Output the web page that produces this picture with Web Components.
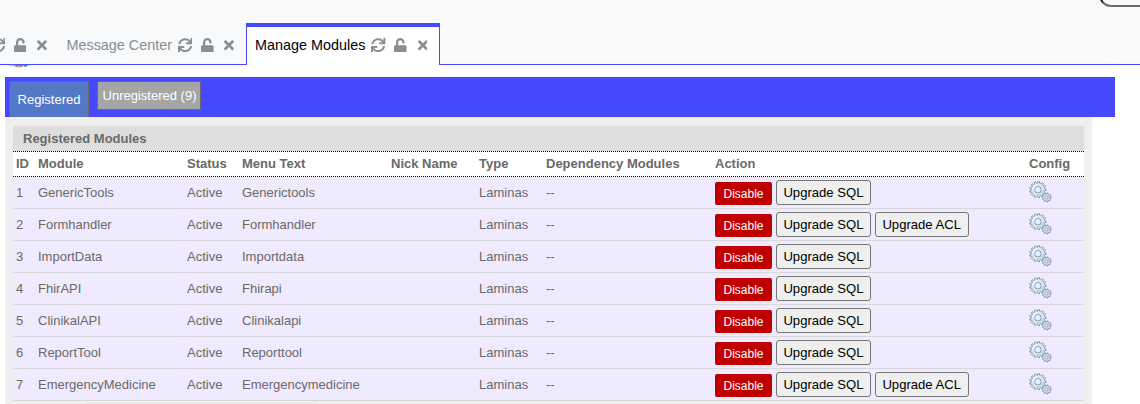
<!DOCTYPE html>
<html lang="en"><head><meta charset="utf-8"><title>Manage Modules</title>
<style>html,body{margin:0;height:404px;overflow:hidden;background:#fff;font-family:"Liberation Sans",Arial,sans-serif}</style></head>
<body><modules-app></modules-app>
<script>
const define=(name,html,setup)=>customElements.define(name,class extends HTMLElement{
  connectedCallback(){
    if(this.shadowRoot)return;
    const t=document.createElement('template');
    t.innerHTML=html;
    this.attachShadow({mode:'open'}).append(t.content.cloneNode(true));
    if(setup)setup(this,this.shadowRoot);
  }
});

const SYNC='M440.65 12.57l4 82.77A247.16 247.16 0 0 0 255.83 8C134.73 8 33.91 94.92 12.29 209.82A12 12 0 0 0 24.09 224h49.05a12 12 0 0 0 11.67-9.26 175.91 175.91 0 0 1 317-56.94l-101.46-4.86a12 12 0 0 0-12.57 12v47.41a12 12 0 0 0 12 12H500a12 12 0 0 0 12-12V12a12 12 0 0 0-12-12h-47.37a12 12 0 0 0-11.98 12.57zM255.83 432a175.61 175.61 0 0 1-146-77.8l101.8 4.87a12 12 0 0 0 12.57-12v-47.4a12 12 0 0 0-12-12H12a12 12 0 0 0-12 12V500a12 12 0 0 0 12 12h47.35a12 12 0 0 0 12-12.6l-4.15-82.57A247.17 247.17 0 0 0 255.83 504c121.11 0 221.93-86.92 243.55-201.82a12 12 0 0 0-11.8-14.18h-49.05a12 12 0 0 0-11.67 9.26A175.86 175.86 0 0 1 255.83 432z';
const UNLOCK='M400 256H152V152.9c0-39.6 31.7-72.5 71.3-72.9 40-.4 72.7 32.1 72.7 72v16c0 13.3 10.7 24 24 24h32c13.3 0 24-10.7 24-24v-16C376 68 307.5-.3 223.5 0 139.5.3 72 69.5 72 153.5V256H48c-26.5 0-48 21.5-48 48v160c0 26.5 21.5 48 48 48h352c26.5 0 48-21.5 48-48V304c0-26.5-21.5-48-48-48z';
const TIMES='M242.72 256l100.07-100.07c12.28-12.28 12.28-32.19 0-44.48l-22.24-22.24c-12.28-12.28-32.19-12.28-44.48 0L176 189.28 75.93 89.21c-12.28-12.28-32.19-12.28-44.48 0L9.21 111.45c-12.28 12.28-12.28 32.19 0 44.48L109.28 256 9.21 356.07c-12.28 12.28-12.28 32.19 0 44.48l22.24 22.24c12.28 12.28 32.2 12.28 44.48 0L176 322.72l100.07 100.07c12.28 12.28 32.2 12.28 44.48 0l22.24-22.24c12.28-12.28 12.28-32.19 0-44.48L242.72 256z';

// Toothed outline with a round hole in the middle.
const gear=(cx,cy,outer,root,hole,teeth)=>{
  let d='';
  const step=2*Math.PI/teeth;
  for(let i=0;i<teeth;i++){
    for(const [r,o] of [[root,-.32],[outer,-.18],[outer,.18],[root,.32]]){
      const a=(i+o)*step;
      d+=(d?'L':'M')+(cx+r*Math.cos(a)).toFixed(2)+' '+(cy+r*Math.sin(a)).toFixed(2);
    }
  }
  return d+`ZM${cx-hole} ${cy}a${hole} ${hole} 0 1 0 ${2*hole} 0a${hole} ${hole} 0 1 0 ${-2*hole} 0Z`;
};

define('frame-tab',`<style>
:host{display:flex;box-sizing:border-box;height:42px;flex:none;align-items:center;padding:2px 11.9px 0 8.6px;font-size:14.4px;color:#868e96;white-space:nowrap}
:host([active]){background:#fff;color:#000;border:1px solid #4649ff;border-top-width:4px;border-bottom:0;padding:0 11.2px 2px 8px}
:host(:empty){padding-right:11.2px}
svg{height:14.4px;fill:#868e96;flex:none;display:block}
.s{width:14.4px;margin-left:6px}.u{width:12.6px;margin-left:8.6px}.x{width:9.9px;margin-left:10.6px}
</style><slot></slot>
<svg class="s" viewBox="0 0 512 512"><path d="${SYNC}"/></svg>
<svg class="u" viewBox="0 0 448 512"><path d="${UNLOCK}"/></svg>
<svg class="x" viewBox="0 0 352 512"><path d="${TIMES}"/></svg>`);

define('tab-strip',`<style>
:host{display:flex;position:relative;box-sizing:border-box;height:65px;background:linear-gradient(#4649ff,#4649ff) bottom/100% 1px no-repeat #f8f9fa;padding-top:23px;overflow:hidden;justify-content:flex-start}
.lead{width:246px;display:flex;justify-content:flex-end;flex:none}
.search{position:absolute;left:1099px;top:-24px;width:80px;height:27px;border:2px solid #6b6b6b;border-left-color:#222;border-radius:12px}
</style><div class="lead"><slot name="background"></slot></div><slot></slot><div class="search"></div>`);

define('action-button',`<style>
:host{display:inline-flex;box-sizing:border-box;width:95px;height:25px;padding-left:6.4px;align-items:center;border:1px solid #767676;border-radius:3px;background:#efefef;color:#000;font-size:13.1px;white-space:nowrap}
:host([acl]){width:94px}
:host([danger]){height:23px;width:57px;padding:0;justify-content:center;margin-top:2px;border:0;border-radius:2px;background:#c00000;color:#fff;font-size:12px}
</style><slot></slot>`);

define('config-gears',`<style>:host{display:block;width:24px;height:24px}svg{display:block}</style>
<svg width="24" height="24" viewBox="0 0 24 24" fill="#dce7f1" fill-rule="evenodd">
<path d="${gear(8.9,9.7,8.2,6.6,3.3,13)}" stroke="#7f95ab" stroke-width=".9"/>
<path d="M4.2 9.7a4.7 4.7 0 0 1 4.7-4.7" fill="none" stroke="#f8fbfd" stroke-width="1.5"/>
<path d="M13.9 10.2a5 5 0 0 1-5 4.5" fill="none" stroke="#bccddd" stroke-width="1.4"/>
<path d="${gear(17.7,17.4,4.5,3.5,1.6,9)}" stroke="#70879f" stroke-width=".8"/>
</svg>`);

define('module-nav',`<style>
:host{display:flex;box-sizing:border-box;width:1110px;height:40px;margin-left:5px;padding:4px 4px 0;gap:8px;background:#4649ff;color:#fff;font-size:13px;align-items:flex-start}
div{box-sizing:border-box;border:1px solid #6a6a6a;display:flex;align-items:center;justify-content:center;white-space:nowrap}
.on{width:80px;height:36px;border-bottom:0;background:#5478c8}
.off{width:104px;height:29px;padding-left:1px;background:#a5a5a5}
</style><div class="on">Registered</div><div class="off">Unregistered (9)</div>`);

define('module-row',`<style>
:host{display:grid;grid-template-columns:22px 149px 55px 149px 88px 67px 169px 314px 58px;box-sizing:border-box;height:32px;border-bottom:1px solid #d8d8dc;background:#f0eafe;align-items:center}
span{padding-left:3px;white-space:nowrap}
.actions{display:flex;gap:4px;padding-left:3px}
config-gears{margin:-1px 0 0 3px}
</style>`,(el,root)=>{
  const [id,name,menu]=el.getAttribute('values').split('|');
  const acl=el.hasAttribute('acl')?'<action-button acl>Upgrade ACL</action-button>':'';
  root.innerHTML+=`<span>${id}</span><span>${name}</span><span>Active</span><span>${menu}</span><span></span><span>Laminas</span><span>--</span><div class="actions"><action-button danger>Disable</action-button><action-button>Upgrade SQL</action-button>${acl}</div><config-gears></config-gears>`;
});

define('module-table',`<style>
:host{display:block;box-sizing:border-box;width:1087px;height:287px;margin-left:5px;padding:9px 8px 0;background:#efefef;color:#696969;font-size:13px}
.title{box-sizing:border-box;height:25px;padding:0 10px;display:flex;align-items:center;background:#ddd;font-weight:bold}
.head{display:grid;grid-template-columns:22px 149px 55px 149px 88px 67px 169px 314px 58px;box-sizing:border-box;height:26px;border-top:1px dotted #000;border-bottom:1px dotted #000;background:#fff;font-weight:bold;align-items:center}
.head span{padding:0 0 2px 3px;white-space:nowrap}
.next{box-sizing:border-box;width:229px;height:2px;margin:1px 0 0 74px;border:1px solid #e6e6e6;border-bottom:0}
</style><div class="title">Registered Modules</div>
<div class="head"><span>ID</span><span>Module</span><span>Status</span><span>Menu Text</span><span>Nick Name</span><span>Type</span><span>Dependency Modules</span><span>Action</span><span>Config</span></div>
<slot></slot><div class="next"></div>`);

define('modules-app',`<style>
:host{display:block;height:404px;overflow:hidden}
.peek{height:12px;padding-left:7px}
.peek svg{display:block}
</style>
<tab-strip><frame-tab slot="background"></frame-tab><frame-tab slot="background">Message Center</frame-tab><frame-tab active>Manage Modules</frame-tab></tab-strip>
<div class="peek"><svg width="24" height="3" viewBox="0 0 24 3"><path d="M0 0h24l-4 1.5H4z" fill="#d3d6dc"/><path d="M7 0h10l-2 2H9z" fill="#8c8578"/><path d="M10 1h5l-1 1.6h-3z" fill="#cfae3c"/><path d="M17 0h3v1.6h-3z" fill="#3b9a62"/></svg></div>
<module-nav></module-nav>
<module-table>
<module-row values="1|GenericTools|Generictools"></module-row>
<module-row values="2|Formhandler|Formhandler" acl></module-row>
<module-row values="3|ImportData|Importdata"></module-row>
<module-row values="4|FhirAPI|Fhirapi"></module-row>
<module-row values="5|ClinikalAPI|Clinikalapi"></module-row>
<module-row values="6|ReportTool|Reporttool"></module-row>
<module-row values="7|EmergencyMedicine|Emergencymedicine" acl></module-row>
</module-table>`);
</script></body></html>
